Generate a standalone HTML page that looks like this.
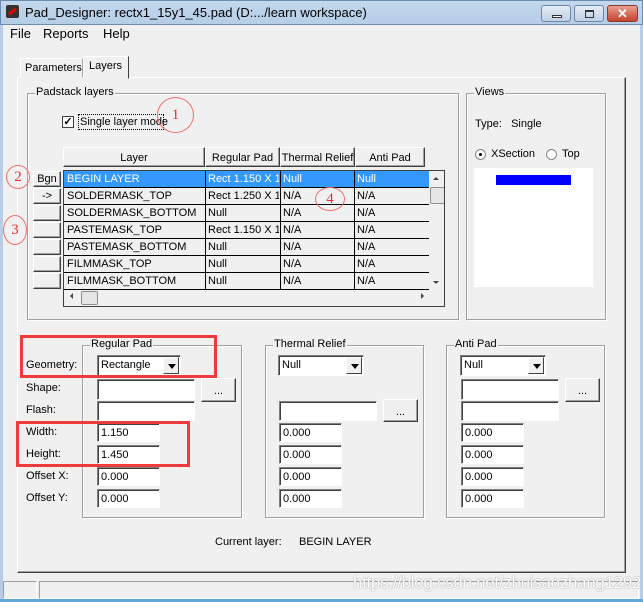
<!DOCTYPE html>
<html><head><style>
*{box-sizing:border-box;white-space:nowrap}
body{margin:0;width:643px;height:602px;overflow:hidden;background:#f0f0f0;font-family:"Liberation Sans",sans-serif;font-size:11px;color:#000;position:relative}
.a{position:absolute}
.grp{position:absolute;border:1px solid #a0a0a0;box-shadow:1px 1px 0 #fff inset,1px 1px 0 #fff}
.gl{position:absolute;top:-8px;left:7px;background:#f0f0f0;padding:0 1px;font-size:11px}
.in{position:absolute;background:#fff;border:1px solid;border-color:#808080 #fff #fff #808080;box-shadow:inset 1px 1px 0 #404040;padding:3px 0 0 3px;font-size:11px}
.btn{position:absolute;background:#f0f0f0;border:1px solid;border-color:#fff #404040 #404040 #fff;box-shadow:inset -1px -1px 0 #a0a0a0;text-align:center;font-size:11px}
.cb{position:absolute;background:#fff;border:1px solid;border-color:#808080 #fff #fff #808080;box-shadow:inset 1px 1px 0 #404040;padding:3px 0 0 3px}
.arr{position:absolute;right:1px;top:1px;bottom:1px;width:16px;background:#f0f0f0;border:1px solid;border-color:#fff #404040 #404040 #fff}
.arr:after{content:"";position:absolute;left:4px;top:6px;border:4px solid transparent;border-top:5px solid #000;border-bottom:0}
.row{position:absolute;left:0;height:17px;width:365px;border-bottom:1px solid #000}
.row span{position:absolute;top:2px;font-size:11px;overflow:hidden}
.row span:nth-child(1){left:3px;width:137px}
.row span:nth-child(2){left:144px;width:71px}
.row span:nth-child(3){left:219px;width:70px}
.row span:nth-child(4){left:293px;width:70px}
.red{position:absolute;border:3px solid #ef3b3b}
.circ{position:absolute;border:1px solid #f07070;border-radius:50%;color:#e03030;font-family:"Liberation Serif",serif;font-size:15px;text-align:center}
</style></head><body>
<div class="a" style="left:0;top:0;width:643px;height:25px;background:linear-gradient(#c4d8ec,#b5cde6);border:1px solid #6a8cb0"></div>
<div class="a" style="left:6px;top:5px;width:13px;height:13px;background:#333;border-radius:2px"><div style="position:absolute;left:2px;top:5px;width:9px;height:3px;background:#e00;transform:rotate(-40deg)"></div></div>
<div class="a" style="left:25px;top:5px;font-size:13px">Pad_Designer: rectx1_15y1_45.pad (D:.../learn workspace)</div>
<div class="a" style="left:541px;top:5px;width:30px;height:17px;border:1px solid #6f86a4;border-radius:3px;background:linear-gradient(#e4ecf5,#c0d0e4)"><div style="position:absolute;left:10px;top:9px;width:10px;height:3px;border:1px solid #333;background:#fff"></div></div>
<div class="a" style="left:574px;top:5px;width:30px;height:17px;border:1px solid #6f86a4;border-radius:3px;background:linear-gradient(#e4ecf5,#c0d0e4)"><div style="position:absolute;left:10px;top:4px;width:9px;height:8px;border:1px solid #333;border-top-width:2px"></div></div>
<div class="a" style="left:607px;top:5px;width:31px;height:17px;border:1px solid #8a3a2c;border-radius:3px;background:linear-gradient(#e8a090,#c2422c);color:#fff;font-weight:bold;font-size:13px;text-align:center;line-height:15px">✕</div>
<div class="a" style="left:0;top:25px;width:3px;height:577px;background:#b8cde4"></div>
<div class="a" style="left:640px;top:25px;width:3px;height:577px;background:#b8cde4"></div>
<div class="a" style="left:0;top:599px;width:643px;height:3px;background:#5fa8d8"></div>
<div class="a" style="left:10px;top:26px;font-size:13px">File</div>
<div class="a" style="left:43px;top:26px;font-size:13px">Reports</div>
<div class="a" style="left:103px;top:26px;font-size:13px">Help</div>
<div class="a" style="left:17px;top:77px;width:609px;height:496px;border:1px solid;border-color:#fff #404040 #404040 #fff;box-shadow:inset -1px -1px 0 #a0a0a0"></div>
<div class="a" style="left:20px;top:58px;width:63px;height:20px;border:1px solid;border-color:#fff #a0a0a0 #f0f0f0 #fff;padding:3px 0 0 4px">Parameters</div>
<div class="a" style="left:83px;top:56px;width:46px;height:23px;border:1px solid;border-color:#fff #404040 #f0f0f0 #fff;background:#f0f0f0;padding:3px 0 0 5px">Layers</div>
<div class="grp" style="left:27px;top:93px;width:432px;height:227px"><div class="gl">Padstack layers</div></div>
<div class="a" style="left:62px;top:116px;width:12px;height:12px;background:#fff;border:1px solid #404040;font-size:11px;line-height:10px;text-align:center;font-weight:bold">✓</div>
<div class="a" style="left:78px;top:114px;border:1px dotted #000;padding:1px 0 0 1px;height:16px;width:86px">Single layer mode</div>
<div class="circ" style="left:157px;top:97px;width:37px;height:36px;line-height:34px">1</div>
<div class="btn" style="left:63px;top:147px;width:142px;height:20px;padding-top:4px">Layer</div>
<div class="btn" style="left:205px;top:147px;width:75px;height:20px;padding-top:4px">Regular Pad</div>
<div class="btn" style="left:280px;top:147px;width:75px;height:20px;padding-top:4px">Thermal Relief</div>
<div class="btn" style="left:355px;top:147px;width:70px;height:20px;padding-top:4px">Anti Pad</div>
<div class="btn" style="left:33px;top:171px;width:28px;height:16px;padding-top:1px">Bgn</div>
<div class="btn" style="left:33px;top:188px;width:28px;height:16px;padding-top:1px">-&gt;</div>
<div class="btn" style="left:33px;top:205px;width:28px;height:16px"></div>
<div class="btn" style="left:33px;top:222px;width:28px;height:16px"></div>
<div class="btn" style="left:33px;top:239px;width:28px;height:16px"></div>
<div class="btn" style="left:33px;top:256px;width:28px;height:16px"></div>
<div class="btn" style="left:33px;top:273px;width:28px;height:16px"></div>
<div class="circ" style="left:6px;top:165px;width:24px;height:24px;line-height:22px">2</div>
<div class="circ" style="left:3px;top:215px;width:24px;height:30px;line-height:28px">3</div>
<div class="a" style="left:63px;top:170px;width:382px;height:137px;border:1px solid #404040;background:#f0f0f0;overflow:hidden">
 <div class="row" style="top:0;background:#3399ff;color:#fff"><span>BEGIN LAYER</span><span>Rect 1.150 X 1.450</span><span>Null</span><span>Null</span></div>
 <div class="row" style="top:17px"><span>SOLDERMASK_TOP</span><span>Rect 1.250 X 1.550</span><span>N/A</span><span>N/A</span></div>
 <div class="row" style="top:34px"><span>SOLDERMASK_BOTTOM</span><span>Null</span><span>N/A</span><span>N/A</span></div>
 <div class="row" style="top:51px"><span>PASTEMASK_TOP</span><span>Rect 1.150 X 1.450</span><span>N/A</span><span>N/A</span></div>
 <div class="row" style="top:68px"><span>PASTEMASK_BOTTOM</span><span>Null</span><span>N/A</span><span>N/A</span></div>
 <div class="row" style="top:85px"><span>FILMMASK_TOP</span><span>Null</span><span>N/A</span><span>N/A</span></div>
 <div class="row" style="top:102px"><span>FILMMASK_BOTTOM</span><span>Null</span><span>N/A</span><span>N/A</span></div>
 <div class="a" style="left:141px;top:0;width:1px;height:119px;background:#000"></div>
 <div class="a" style="left:216px;top:0;width:1px;height:119px;background:#000"></div>
 <div class="a" style="left:290px;top:0;width:1px;height:119px;background:#000"></div>
 <div class="a" style="left:365px;top:0;width:16px;height:119px;background:#f0f0f0"></div>
 <div class="a" style="left:369px;top:6px;border:3px solid transparent;border-bottom:3px solid #444;border-top:0"></div>
 <div class="a" style="left:366px;top:16px;width:15px;height:17px;background:#e6e6e6;border:1px solid #909090;border-radius:2px"></div>
 <div class="a" style="left:369px;top:110px;border:3px solid transparent;border-top:3px solid #444;border-bottom:0"></div>
 <div class="a" style="top:122px;border:3px solid transparent;border-left:3px solid #444;border-right:0;right:20px"></div>
 <div class="a" style="left:6px;top:122px;border:3px solid transparent;border-right:3px solid #444;border-left:0"></div>
 <div class="a" style="left:17px;top:120px;width:17px;height:14px;background:#e6e6e6;border:1px solid #909090;border-radius:2px"></div>
</div>
<div class="circ" style="left:315px;top:187px;width:30px;height:24px;line-height:22px">4</div>
<div class="grp" style="left:466px;top:93px;width:140px;height:227px"><div class="gl">Views</div></div>
<div class="a" style="left:475px;top:118px">Type:&nbsp;&nbsp; Single</div>
<div class="a" style="left:475px;top:149px;width:11px;height:11px;border-radius:50%;background:#fff;border:1px solid #888"><div style="position:absolute;left:3px;top:3px;width:3px;height:3px;background:#000;border-radius:50%"></div></div>
<div class="a" style="left:491px;top:148px">XSection</div>
<div class="a" style="left:546px;top:149px;width:11px;height:11px;border-radius:50%;background:#fff;border:1px solid #888"></div>
<div class="a" style="left:562px;top:148px">Top</div>
<div class="a" style="left:474px;top:168px;width:119px;height:119px;background:#fff"></div>
<div class="a" style="left:496px;top:175px;width:75px;height:10px;background:#0000ff"></div>
<div class="grp" style="left:82px;top:345px;width:160px;height:173px"><div class="gl">Regular Pad</div></div>
<div class="grp" style="left:265px;top:345px;width:159px;height:173px"><div class="gl">Thermal Relief</div></div>
<div class="grp" style="left:446px;top:345px;width:159px;height:173px"><div class="gl">Anti Pad</div></div>
<div class="a" style="left:26px;top:359px">Geometry:</div>
<div class="a" style="left:26px;top:382px">Shape:</div>
<div class="a" style="left:26px;top:404px">Flash:</div>
<div class="a" style="left:26px;top:426px">Width:</div>
<div class="a" style="left:26px;top:448px">Height:</div>
<div class="a" style="left:26px;top:470px">Offset X:</div>
<div class="a" style="left:26px;top:492px">Offset Y:</div>
<div class="cb" style="left:97px;top:355px;width:84px;height:21px">Rectangle<div class="arr"></div></div>
<div class="cb" style="left:278px;top:355px;width:86px;height:21px">Null<div class="arr"></div></div>
<div class="cb" style="left:460px;top:355px;width:86px;height:21px">Null<div class="arr"></div></div>
<div class="in" style="left:97px;top:379px;width:98px;height:21px"></div>
<div class="btn" style="left:201px;top:378px;width:35px;height:24px;padding-top:6px">...</div>
<div class="in" style="left:97px;top:401px;width:98px;height:20px"></div>
<div class="in" style="left:279px;top:401px;width:98px;height:20px"></div>
<div class="btn" style="left:383px;top:399px;width:35px;height:23px;padding-top:6px">...</div>
<div class="in" style="left:461px;top:379px;width:98px;height:21px"></div>
<div class="btn" style="left:565px;top:378px;width:35px;height:24px;padding-top:6px">...</div>
<div class="in" style="left:461px;top:401px;width:98px;height:20px"></div>
<div class="in" style="left:97px;top:423px;width:63px;height:19px">1.150</div>
<div class="in" style="left:97px;top:445px;width:63px;height:19px">1.450</div>
<div class="in" style="left:97px;top:467px;width:63px;height:19px">0.000</div>
<div class="in" style="left:97px;top:489px;width:63px;height:19px">0.000</div>
<div class="in" style="left:279px;top:423px;width:63px;height:19px">0.000</div>
<div class="in" style="left:279px;top:445px;width:63px;height:19px">0.000</div>
<div class="in" style="left:279px;top:467px;width:63px;height:19px">0.000</div>
<div class="in" style="left:279px;top:489px;width:63px;height:19px">0.000</div>
<div class="in" style="left:461px;top:423px;width:63px;height:19px">0.000</div>
<div class="in" style="left:461px;top:445px;width:63px;height:19px">0.000</div>
<div class="in" style="left:461px;top:467px;width:63px;height:19px">0.000</div>
<div class="in" style="left:461px;top:489px;width:63px;height:19px">0.000</div>
<div class="red" style="left:20px;top:335px;width:197px;height:43px"></div>
<div class="red" style="left:16px;top:421px;width:174px;height:46px"></div>
<div class="a" style="left:215px;top:536px">Current layer:</div>
<div class="a" style="left:299px;top:536px">BEGIN LAYER</div>
<div class="a" style="left:3px;top:581px;width:34px;height:18px;border:1px solid;border-color:#a0a0a0 #fff #fff #a0a0a0"></div>
<div class="a" style="left:39px;top:581px;width:600px;height:18px;border:1px solid;border-color:#a0a0a0 #fff #fff #a0a0a0"></div>
<div class="a" style="left:353px;top:573px;font-size:17px;color:#fff;text-shadow:0 0 1px #999,0 0 1px #999;letter-spacing:-0.3px">https://blog.csdn.net/zhuisaozhang1292</div>
</body></html>
